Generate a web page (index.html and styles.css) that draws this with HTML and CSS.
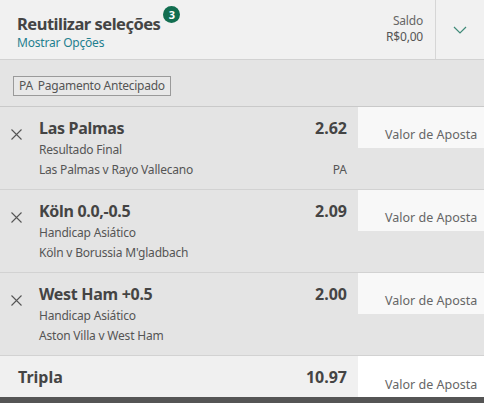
FILE: index.html
```html
<!DOCTYPE html>
<html lang="pt-BR">
<head>
<meta charset="utf-8">
<title>Boletim</title>
<link rel="stylesheet" href="styles.css">
</head>
<body>
<div class="slip">
  <header class="header">
    <div class="header-main">
      <div class="title">Reutilizar seleções<span class="badge">3</span></div>
      <div class="link">Mostrar Opções</div>
    </div>
    <div class="balance">
      <div>Saldo</div>
      <div class="amount">R$0,00</div>
    </div>
    <div class="toggle">
      <svg width="14" height="8" viewBox="0 0 14 8"><path d="M1 1 L7 7 L13 1" fill="none" stroke="#3f8a78" stroke-width="1.2"/></svg>
    </div>
  </header>

  <div class="options">
    <span class="tag"><span class="tag-code">PA</span>Pagamento Antecipado</span>
  </div>

  <div class="sel">
    <div class="sel-main">
      <div class="remove"><svg width="11" height="11" viewBox="0 0 11 11"><path d="M0.5 0.5 L10.5 10.5 M10.5 0.5 L0.5 10.5" stroke="#555" stroke-width="1.1"/></svg></div>
      <div class="info">
        <div class="name">Las Palmas</div>
        <div class="market">Resultado Final</div>
        <div class="event">Las Palmas v Rayo Vallecano</div>
      </div>
      <div class="odds-col">
        <div class="odds">2.62</div>
        <div class="flag">PA</div>
      </div>
    </div>
    <div class="stake-col"><div class="stake">Valor de Aposta</div></div>
  </div>

  <div class="sel">
    <div class="sel-main">
      <div class="remove"><svg width="11" height="11" viewBox="0 0 11 11"><path d="M0.5 0.5 L10.5 10.5 M10.5 0.5 L0.5 10.5" stroke="#555" stroke-width="1.1"/></svg></div>
      <div class="info">
        <div class="name">Köln 0.0,-0.5</div>
        <div class="market">Handicap Asiático</div>
        <div class="event">Köln v Borussia M'gladbach</div>
      </div>
      <div class="odds-col">
        <div class="odds">2.09</div>
      </div>
    </div>
    <div class="stake-col"><div class="stake">Valor de Aposta</div></div>
  </div>

  <div class="sel">
    <div class="sel-main">
      <div class="remove"><svg width="11" height="11" viewBox="0 0 11 11"><path d="M0.5 0.5 L10.5 10.5 M10.5 0.5 L0.5 10.5" stroke="#555" stroke-width="1.1"/></svg></div>
      <div class="info">
        <div class="name">West Ham +0.5</div>
        <div class="market">Handicap Asiático</div>
        <div class="event">Aston Villa v West Ham</div>
      </div>
      <div class="odds-col">
        <div class="odds">2.00</div>
      </div>
    </div>
    <div class="stake-col"><div class="stake">Valor de Aposta</div></div>
  </div>

  <div class="total">
    <div class="total-main">
      <div class="total-label">Tripla</div>
      <div class="odds">10.97</div>
    </div>
    <div class="stake total-stake">Valor de Aposta</div>
  </div>
  <div class="footer-bar"></div>
</div>
</body>
</html>
```
FILE: styles.css
```css
* { box-sizing: border-box; }
html, body { margin: 0; padding: 0; }
body {
  font-family: "Noto Sans", "Open Sans", "Liberation Sans", sans-serif;
  color: #444;
  background: #e4e4e4;
  width: 484px;
  overflow: hidden;
}
.slip { width: 484px; }

.header {
  display: flex;
  height: 60px;
  background: #f1f1f1;
  border-bottom: 1px solid #d2d2d2;
}
.header-main { flex: 1; padding: 6px 0 0 17px; }
.title {
  font-size: 16.5px;
  font-weight: 700;
  color: #444;
  line-height: 22px;
  letter-spacing: -0.5px;
}
.badge {
  display: inline-flex;
  align-items: center;
  justify-content: center;
  width: 17px;
  height: 17px;
  border-radius: 50%;
  background: #126e50;
  color: #fff;
  font-size: 11px;
  font-weight: 700;
  letter-spacing: 0;
  margin-left: 3px;
  vertical-align: 11px;
}
.link {
  font-size: 12px;
  color: #1f7f8f;
  line-height: 16px;
  letter-spacing: -0.2px;
}
.balance {
  text-align: right;
  font-size: 12px;
  color: #666;
  line-height: 16px;
  padding: 13px 12px 0 0;
  letter-spacing: -0.2px;
}
.amount { color: #555; }
.toggle {
  width: 49px;
  border-left: 1px solid #d6d6d6;
  display: flex;
  align-items: center;
  justify-content: center;
  padding-top: 1px;
}

.options {
  height: 47px;
  padding: 13px 13px 0;
  background: #e4e4e4;
  border-bottom: 1px solid #c9c9c9;
}
.tag {
  display: inline-block;
  height: 20px;
  line-height: 18px;
  padding: 0 5px;
  border: 1px solid #9a9a9a;
  background: #e8e8e8;
  font-size: 12px;
  color: #555;
  letter-spacing: -0.25px;
}
.tag-code { margin-right: 5px; }

.sel {
  display: flex;
  height: 83px;
  border-bottom: 1px solid #d2d2d2;
  background: #e4e4e4;
}
.sel-main {
  width: 358px;
  display: flex;
  padding: 11px 11px 0 0;
}
.remove { width: 39px; padding: 5px 0 0 11px; }
.info { flex: 1; }
.name {
  font-size: 16px;
  font-weight: 700;
  line-height: 20px;
  color: #444;
  letter-spacing: -0.3px;
}
.market, .event {
  font-size: 12px;
  line-height: 20px;
  color: #555;
  letter-spacing: -0.2px;
}
.market { margin-top: 2px; }
.odds-col { text-align: right; }
.odds {
  font-size: 16px;
  font-weight: 700;
  line-height: 20px;
  color: #444;
}
.flag {
  font-size: 12px;
  color: #555;
  line-height: 20px;
  margin-top: 22px;
}
.stake-col { flex: 1; }
.stake {
  height: 41px;
  background: #f8f8f8;
  font-size: 12.5px;
  color: #666;
  padding: 19px 0 0 27px;
  line-height: 18px;
}

.total {
  display: flex;
  height: 41px;
  background: #f0f0f0;
}
.total-main {
  width: 358px;
  display: flex;
  justify-content: space-between;
  align-items: center;
  padding: 0 11px 0 18px;
}
.total-label {
  font-size: 16px;
  font-weight: 700;
  color: #444;
}
.total-stake { flex: 1; background: #fff; padding-top: 20px; }
.footer-bar { height: 6px; background: #555; }
```
